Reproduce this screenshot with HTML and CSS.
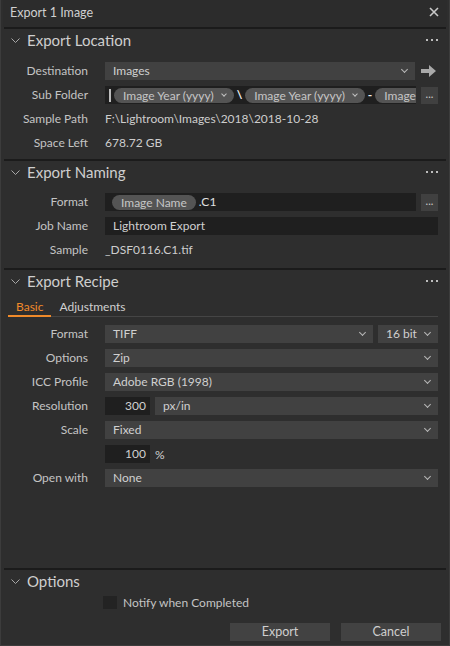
FILE: index.html
```html
<!DOCTYPE html>
<html>
<head>
<meta charset="utf-8">
<link rel="stylesheet" href="styles.css">
</head>
<body>
<div class="window">
  <div class="titlebar">
    <span class="title">Export 1 Image</span>
    <svg class="close" width="10" height="10" viewBox="0 0 10 10"><path d="M1 1L9 9M9 1L1 9" stroke="#c8c8c8" stroke-width="1.6"/></svg>
  </div>
  <div class="divider"></div>

  <div class="section">
    <div class="sec-head">
      <svg class="chev" width="9" height="6" viewBox="0 0 9 6"><path d="M0.5 0.5L4.5 4.5L8.5 0.5" fill="none" stroke="#a8a8a8" stroke-width="1"/></svg>
      <span class="sec-title">Export Location</span>
      <span class="dots"><i></i><i></i><i></i></span>
    </div>
    <div class="grid">
      <div class="label">Destination</div>
      <div class="row-with-btn">
        <div class="select grow">Images<span class="caret"></span></div>
        <svg class="arrow" width="16" height="12" viewBox="0 0 16 12"><path d="M0 4H8V0L15 6L8 12V8H0Z" fill="#a9a9a9"/></svg>
      </div>
      <div class="label">Sub Folder</div>
      <div class="row-with-btn">
        <div class="input grow tokens">
          <span class="cursor"></span>
          <span class="pill">Image Year (yyyy)<span class="pcaret"></span></span>
          <span class="sep">\</span>
          <span class="pill">Image Year (yyyy)<span class="pcaret"></span></span>
          <span class="sep">-</span>
          <span class="pill last">Image</span>
        </div>
        <div class="more">...</div>
      </div>
      <div class="label">Sample Path</div>
      <div class="value">F:\Lightroom\Images\2018\2018-10-28</div>
      <div class="label">Space Left</div>
      <div class="value">678.72 GB</div>
    </div>
  </div>
  <div class="divider"></div>

  <div class="section">
    <div class="sec-head">
      <svg class="chev" width="9" height="6" viewBox="0 0 9 6"><path d="M0.5 0.5L4.5 4.5L8.5 0.5" fill="none" stroke="#a8a8a8" stroke-width="1"/></svg>
      <span class="sec-title">Export Naming</span>
      <span class="dots"><i></i><i></i><i></i></span>
    </div>
    <div class="grid naming">
      <div class="label">Format</div>
      <div class="row-with-btn">
        <div class="input grow tokens">
          <span class="pill pill-name">Image Name</span><span class="suffix">.C1</span>
        </div>
        <div class="more">...</div>
      </div>
      <div class="label">Job Name</div>
      <div class="input">Lightroom Export</div>
      <div class="label">Sample</div>
      <div class="value">_DSF0116.C1.tif</div>
    </div>
  </div>
  <div class="divider"></div>

  <div class="section recipe">
    <div class="sec-head">
      <svg class="chev" width="9" height="6" viewBox="0 0 9 6"><path d="M0.5 0.5L4.5 4.5L8.5 0.5" fill="none" stroke="#a8a8a8" stroke-width="1"/></svg>
      <span class="sec-title">Export Recipe</span>
      <span class="dots"><i></i><i></i><i></i></span>
    </div>
    <div class="tabs">
      <span class="tab active">Basic</span>
      <span class="tab">Adjustments</span>
    </div>
    <div class="grid">
      <div class="label">Format</div>
      <div class="pair">
        <div class="select grow">TIFF<span class="caret"></span></div>
        <div class="select bits">16 bit<span class="caret"></span></div>
      </div>
      <div class="label">Options</div>
      <div class="select">Zip<span class="caret"></span></div>
      <div class="label">ICC Profile</div>
      <div class="select">Adobe RGB (1998)<span class="caret"></span></div>
      <div class="label">Resolution</div>
      <div class="pair">
        <div class="input num">300</div>
        <div class="select grow">px/in<span class="caret"></span></div>
      </div>
      <div class="label">Scale</div>
      <div class="select">Fixed<span class="caret"></span></div>
      <div class="label"></div>
      <div class="pair">
        <div class="input num">100</div>
        <span class="unit">%</span>
      </div>
      <div class="label">Open with</div>
      <div class="select">None<span class="caret"></span></div>
    </div>
  </div>
  <div class="divider"></div>

  <div class="section options">
    <div class="sec-head">
      <svg class="chev" width="9" height="6" viewBox="0 0 9 6"><path d="M0.5 0.5L4.5 4.5L8.5 0.5" fill="none" stroke="#a8a8a8" stroke-width="1"/></svg>
      <span class="sec-title">Options</span>
    </div>
    <label class="check"><span class="box"></span>Notify when Completed</label>
    <div class="buttons">
      <button class="btn">Export</button>
      <button class="btn">Cancel</button>
    </div>
  </div>
</div>
</body>
</html>
```

FILE: styles.css
```css
* { box-sizing: border-box; }
html, body { margin: 0; padding: 0; background: #2b2b2b; }
body {
  width: 450px;
  height: 646px;
  font-family: Lato, "Noto Sans", sans-serif;
  font-size: 12px;
  color: #cbcbcb;
  overflow: hidden;
}
.window {
  width: 450px;
  height: 646px;
  background: #2e2e2e;
  border: 1px solid #3c3c3c;
  border-top: none;
  display: flex;
  flex-direction: column;
  padding: 0 2px 4px;
}
.titlebar {
  height: 27px;
  display: flex;
  align-items: center;
  justify-content: space-between;
  padding: 0 8px 3px 7px;
  background: #2c2c2c;
}
.title { font-size: 12.5px; color: #d0d0d0; }
.close { display: block; }
.divider {
  height: 2px;
  background: #1b1b1b;
  margin: 0 1px;
  flex: none;
}
.section { flex: none; padding: 0 9px 0 0; }
.sec-head {
  height: 25px;
  display: flex;
  align-items: center;
  padding-left: 8px;
  padding-bottom: 3px;
}
.chev { display: block; margin-right: 7px; margin-top: 1px; }
.sec-title { font-size: 15px; color: #cfcfcf; flex: 1; }
.dots { display: flex; gap: 3px; }
.dots i { width: 2px; height: 2px; background: #bdbdbd; display: block; }
.grid {
  display: grid;
  grid-template-columns: 85px minmax(0, 1fr);
  column-gap: 17px;
  row-gap: 6px;
  padding: 8px 0 7px;
}
.grid.naming { padding: 7px 0 9px; }
.label {
  height: 18px;
  line-height: 18px;
  text-align: right;
  color: #c4c4c4;
  white-space: nowrap;
}
.value { height: 18px; line-height: 18px; color: #cdcdcd; white-space: nowrap; }
.select, .input {
  height: 18px;
  line-height: 18px;
  padding: 0 8px;
  color: #d0d0d0;
  position: relative;
  white-space: nowrap;
  overflow: hidden;
}
.select { background: #414141; }
.input { background: #1f1f1f; }
.grow { flex: 1; min-width: 0; }
.caret {
  position: absolute;
  right: 8px;
  top: 5px;
  width: 5px;
  height: 5px;
  border-right: 1px solid #b8b8b8;
  border-bottom: 1px solid #b8b8b8;
  transform: rotate(45deg);
}
.row-with-btn { display: flex; gap: 5px; align-items: center; min-width: 0; }
.arrow { display: block; margin: 0 1px; flex: none; }
.more {
  width: 17px;
  height: 17px;
  background: #404040;
  color: #c8c8c8;
  font-size: 11px;
  line-height: 13px;
  text-align: center;
  flex: none;
}
.tokens { display: flex; align-items: center; gap: 3px; padding: 0 0 0 4px; }
.cursor { width: 2px; height: 13px; background: #bdbdbd; flex: none; }
.pill {
  flex: none;
  height: 15px;
  line-height: 15px;
  border-radius: 8px;
  background: #545454;
  color: #c6c6c6;
  padding: 0 20px 0 9px;
  position: relative;
  font-size: 12px;
}
.pill.last { padding-right: 12px; }
.pcaret {
  position: absolute;
  right: 8px;
  top: 4px;
  width: 4px;
  height: 4px;
  border-right: 1px solid #c0c0c0;
  border-bottom: 1px solid #c0c0c0;
  transform: rotate(45deg);
}
.sep { color: #f0f0f0; font-weight: bold; flex: none; }
.pill-name { padding: 0 9px 0 9px; margin-left: 3px; }
.suffix { color: #e0e0e0; margin-left: 0; }
.tabs {
  margin: 3px 0 0 5px;
  height: 19px;
  display: flex;
  border-bottom: 1px solid #454545;
}
.tab { padding: 0 8px; color: #d0d0d0; font-size: 12px; line-height: 17px; }
.tab.active { color: #f08a2a; border-bottom: 2px solid #f08a2a; padding: 0 8px 0 8px; margin-bottom: -1px; }
.recipe .grid { padding-top: 8px; }
.recipe { flex: 1; }
.pair { display: flex; gap: 5px; align-items: center; }
.bits { width: 60px; flex: none; padding-left: 8px; }
.num { width: 45px; text-align: right; padding: 0 4px; flex: none; }
.unit { color: #d0d0d0; }
.options { padding-right: 6px; }
.check {
  display: flex;
  align-items: center;
  gap: 6px;
  margin-left: 100px;
  height: 14px;
  color: #c4c4c4;
}
.box { width: 14px; height: 13px; background: #232323; display: block; }
.buttons {
  display: flex;
  justify-content: flex-end;
  gap: 11px;
  margin-top: 14px;
}
.btn {
  width: 100px;
  height: 18px;
  background: #424242;
  border: none;
  color: #cfcfcf;
  font-family: inherit;
  font-size: 12.5px;
  padding: 0;
  line-height: 18px;
}
```
